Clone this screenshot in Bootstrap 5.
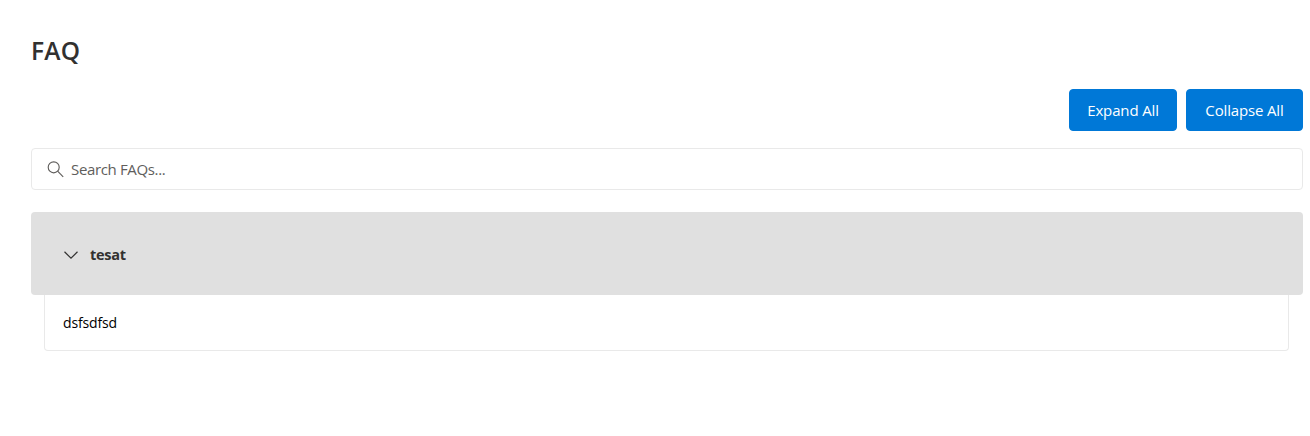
<!DOCTYPE html>
<html lang="en">
<head>
<meta charset="utf-8">
<meta name="viewport" content="width=device-width, initial-scale=1">
<title>FAQ</title>
<link href="https://cdn.jsdelivr.net/npm/bootstrap@5.3.0/dist/css/bootstrap.min.css" rel="stylesheet">
<style>
body{font-family:"Segoe UI","Open Sans","Noto Sans",sans-serif;font-size:15px;line-height:20px;color:#323130;background:#fff}
.faq-page{padding:35px 7px 0 31px}
.faq-title{font-size:24.5px;line-height:32px;font-weight:600;letter-spacing:.3px;margin:0 0 22px}
.faq-actions{gap:9px;margin-bottom:17px}
.faq-actions .btn{--bs-btn-bg:#0078d7;--bs-btn-border-color:#0078d7;--bs-btn-padding-x:0;--bs-btn-padding-y:0;--bs-btn-border-radius:4px;height:42px;font-size:15px;letter-spacing:-.15px}
.btn-expand{width:108px}
.btn-collapse{width:117px}
.faq-search{height:42px;border:1px solid #e9e9e9;border-radius:4px;padding:0 15px 0 14.5px;margin-bottom:22px}
.faq-search input{font-size:15px;line-height:20px;margin-left:7.5px;letter-spacing:-.35px}
.faq-search input::placeholder{color:#605e5c;opacity:1}
.faq-header{height:83px;background:#e0e0e0;border-radius:4px;padding:3px 32px 0;font-size:14.5px;font-weight:700;letter-spacing:-.3px}
.faq-header span{margin-left:11px}
.faq-body{height:56px;margin:0 14px 0 13px;border:1px solid #e9e9e9;border-top:0;border-radius:0 0 4px 4px;padding:0 18px;color:#000;font-size:14px;letter-spacing:-.15px}
</style>
</head>
<body>
<main class="faq-page">
  <h1 class="faq-title">FAQ</h1>
  <div class="faq-actions d-flex justify-content-end">
    <button type="button" class="btn btn-primary btn-expand">Expand All</button>
    <button type="button" class="btn btn-primary btn-collapse">Collapse All</button>
  </div>
  <div class="faq-search d-flex align-items-center">
    <svg width="17" height="17" viewBox="0 0 17 17" fill="none" stroke="#605e5c" stroke-width="1.15"><circle cx="6.7" cy="6.3" r="5.5"/><path d="M10.6 10.2 16.2 15.8"/></svg>
    <input type="text" class="border-0 p-0 bg-transparent flex-grow-1" placeholder="Search FAQs..." aria-label="Search FAQs">
  </div>
  <section>
    <div class="faq-header d-flex align-items-center">
      <svg width="16" height="16" viewBox="0 0 16 16" fill="none" stroke="#323130" stroke-width="1.2"><path d="M1.5 4.8 8 11.2 14.5 4.8"/></svg>
      <span>tesat</span>
    </div>
    <div class="faq-body d-flex align-items-center"><span>dsfsdfsd</span></div>
  </section>
</main>
<script src="https://cdn.jsdelivr.net/npm/bootstrap@5.3.0/dist/js/bootstrap.bundle.min.js"></script>
</body>
</html>
